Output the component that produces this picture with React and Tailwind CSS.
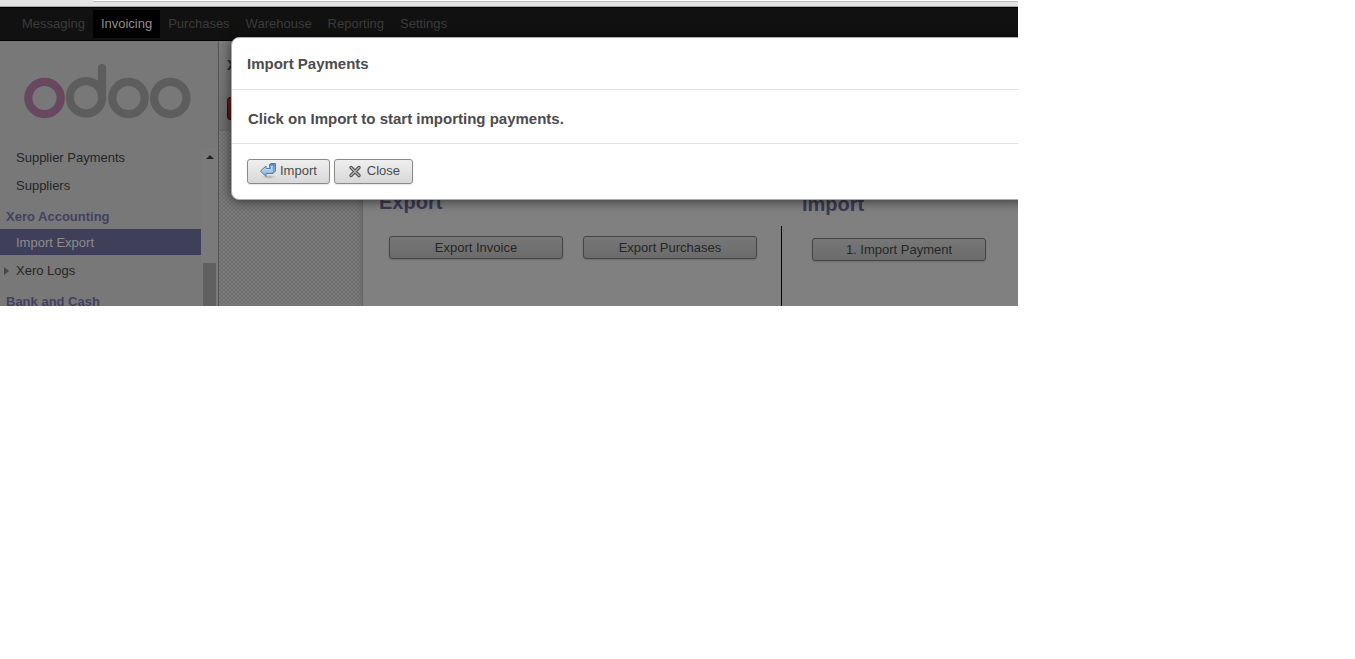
const topMenu = ["Messaging", "Invoicing", "Purchases", "Warehouse", "Reporting", "Settings"];

function Logo() {
  return (
    <svg width="168" height="56" viewBox="0 0 168 56" fill="none" strokeWidth="8.2" role="img" aria-label="odoo">
      <circle cx="21.5" cy="34" r="16.2" stroke="#68485f" />
      <g stroke="#5d5d5d">
        <circle cx="105.5" cy="34" r="16.2" />
        <circle cx="147.3" cy="34" r="16.2" />
        <circle cx="63" cy="33.3" r="16.2" />
        <path d="M79 33.3V4.2" strokeLinecap="round" />
      </g>
    </svg>
  );
}

function ImportIcon() {
  return (
    <svg width="16" height="16" viewBox="0 0 16 16" aria-hidden="true">
      <defs>
        <linearGradient id="arrow" x1="0" y1="0" x2="0" y2="1">
          <stop offset="0" stopColor="#6f9fd0" />
          <stop offset="0.6" stopColor="#a9c8ea" />
          <stop offset="1" stopColor="#6b98cc" />
        </linearGradient>
        <radialGradient id="ground">
          <stop offset="0" stopColor="#aaa" />
          <stop offset="1" stopColor="#aaa" stopOpacity="0" />
        </radialGradient>
      </defs>
      <ellipse cx="9" cy="14" rx="7" ry="2" fill="url(#ground)" />
      <path
        d="M0.5 8L6 3V5.5H10.5V4.5H9.5V1.5L11 0.5H15.5V8L13 10.5H6V13.5Z"
        fill="url(#arrow)"
        stroke="#4d7fb5"
        strokeLinejoin="round"
      />
      <path d="M2 8L5.2 5.2V6.6H11.5V3.5H13.5V7.5" fill="none" stroke="#cfe1f4" strokeWidth="0.8" />
      <path d="M9.5 1.8H13.8V8.2L12.6 10" fill="none" stroke="#3d6ea5" strokeWidth="0.8" />
    </svg>
  );
}

function CloseIcon() {
  return (
    <svg width="16" height="16" viewBox="0 0 16 16" fill="none" strokeLinecap="round" aria-hidden="true">
      <path d="M4 4.5L12 12.5M12 4.5L4 12.5" stroke="#4c4c4c" strokeWidth="3.4" />
      <path d="M4 4.5L12 12.5M12 4.5L4 12.5" stroke="#b5b5b5" strokeWidth="1.4" />
    </svg>
  );
}

function NavLink({ children, active, expandable }) {
  return (
    <a
      href="#"
      className={
        active
          ? "mb-0.5 flex h-[26px] items-center bg-[#403f5a] pt-0.5 text-[#8c8c8c]"
          : "mb-0.5 flex h-[26px] items-center pt-0.5 text-[#262626]"
      }
    >
      <span className="flex w-4 shrink-0 pl-1">
        {expandable && (
          <svg width="5" height="8" viewBox="0 0 5 8" aria-hidden="true">
            <path d="M0 0L5 4L0 8Z" fill="#484848" />
          </svg>
        )}
      </span>
      {children}
    </a>
  );
}

function NavHeading({ children }) {
  return <h2 className="flex h-[29px] items-center pt-1 pl-1.5 font-bold text-[#43415f]">{children}</h2>;
}

function Sidebar() {
  return (
    <aside className="w-[219px] shrink-0 border-r border-[#555] bg-[#787878]">
      <div className="flex h-[103px] justify-center pt-[23px] pr-1">
        <Logo />
      </div>
      <div className="flex h-[162px] overflow-hidden">
        <nav className="min-w-0 flex-1">
          <NavLink>Supplier Payments</NavLink>
          <NavLink>Suppliers</NavLink>
          <NavHeading>Xero Accounting</NavHeading>
          <NavLink active>Import Export</NavLink>
          <NavLink expandable>Xero Logs</NavLink>
          <NavHeading>Bank and Cash</NavHeading>
        </nav>
        <div className="mt-1 flex w-[17px] flex-col items-center justify-between bg-[#7a7a7a] pt-[7px]">
          <svg width="8" height="4" viewBox="0 0 8 4" aria-hidden="true">
            <path d="M4 0L8 4H0Z" fill="#222" />
          </svg>
          <div className="h-[43px] w-[13px] bg-[#606060]" />
        </div>
      </div>
    </aside>
  );
}

function SheetButton({ children }) {
  return (
    <button
      type="button"
      className="h-[23px] w-[174px] rounded-[3px] border border-[#444] bg-linear-to-b from-[#777] to-[#6b6b6b] text-[#262626] shadow-[0_1px_2px_rgba(0,0,0,0.15)]"
    >
      {children}
    </button>
  );
}

function DialogButton({ icon, children }) {
  return (
    <button
      type="button"
      className="flex h-[25px] items-start gap-1 rounded-[3px] border border-[#8a8a8a] bg-linear-to-b from-[#efefef] to-[#d8d8d8] px-3 pt-[3px] text-[#4c4c4c] shadow-[0_1px_2px_rgba(0,0,0,0.1)]"
    >
      {icon}
      {children}
    </button>
  );
}

function Dialog() {
  return (
    <div
      role="dialog"
      aria-labelledby="dialog-title"
      className="absolute top-[37px] -right-4 left-[231px] rounded-lg border border-[#a9aea9] bg-white text-[#4c4c4c] shadow-[0_1px_12px_rgba(0,0,0,0.6)]"
    >
      <h1 id="dialog-title" className="border-b border-[#e2e2e2] px-[15px] pt-4 pb-[15px] text-[15px] leading-5 font-bold">
        Import Payments
      </h1>
      <p className="border-b border-[#e2e2e2] px-4 pt-[19px] pb-3.5 text-[15px] leading-5 font-bold">
        Click on Import to start importing payments.
      </p>
      <div className="flex gap-1 px-[15px] pt-[15px] pb-[15px]">
        <DialogButton icon={<ImportIcon />}>Import</DialogButton>
        <DialogButton icon={<CloseIcon />}>Close</DialogButton>
      </div>
    </div>
  );
}

export default function App() {
  return (
    <div className="min-h-screen bg-white font-['Liberation_Sans',Arial,sans-serif] text-[13px] leading-4">
      <div className="relative w-full max-w-[1018px] overflow-hidden">
        <div className="h-[7px] border-b border-[#a5a8a8] bg-[#e4e4e4] pl-[93px]">
          <div className="h-0.5 border-b border-[#bcbcbc] bg-white" />
        </div>
        <header className="border-y border-black bg-[#111] px-3.5 py-0.5">
          <ul className="flex">
            {topMenu.map((item) => (
              <li key={item}>
                <a
                  href="#"
                  className={
                    item === "Invoicing"
                      ? "block bg-black px-2 py-1.5 text-[#8f8f8f]"
                      : "block px-2 py-1.5 text-[#3c3c3c]"
                  }
                >
                  {item}
                </a>
              </li>
            ))}
          </ul>
        </header>
        <div className="flex">
          <Sidebar />
          <main className="flex min-w-0 flex-1 flex-col">
            <div className="h-[90px] border-b border-[#666] bg-linear-to-b from-[#7c7c7c] to-[#6c6c6c] px-2 pt-4">
              <div className="text-[15px] font-bold text-[#262626]">X</div>
              <button
                type="button"
                aria-label="Save"
                className="mt-6 block h-[23px] w-16 rounded-[3px] border border-[#3a0c0c] bg-linear-to-b from-[#6d1f1f] to-[#541313]"
              />
            </div>
            <div className="flex flex-1 bg-[repeating-conic-gradient(#707070_0_25%,#7a7a7a_0_50%)] bg-size-[4px_4px] pl-[143px]">
              <div className="flex flex-1 border-l border-[#656565] bg-[#808080] shadow-[0_0_8px_rgba(0,0,0,0.15)]">
                <section className="pt-[59px] pl-4">
                  <h2 className="text-xl leading-6 font-bold text-[#3b3a54]">Export</h2>
                  <div className="flex gap-5 pt-[22px] pr-6 pl-2.5">
                    <SheetButton>Export Invoice</SheetButton>
                    <SheetButton>Export Purchases</SheetButton>
                  </div>
                </section>
                <section className="flex pt-[61px]">
                  <div className="mt-[34px] w-px bg-black" />
                  <div className="pl-5">
                    <h2 className="text-xl leading-6 font-bold text-[#3b3a54]">Import</h2>
                    <div className="pt-[22px] pl-2.5">
                      <SheetButton>1. Import Payment</SheetButton>
                    </div>
                  </div>
                </section>
              </div>
            </div>
          </main>
        </div>
        <Dialog />
      </div>
    </div>
  );
}
